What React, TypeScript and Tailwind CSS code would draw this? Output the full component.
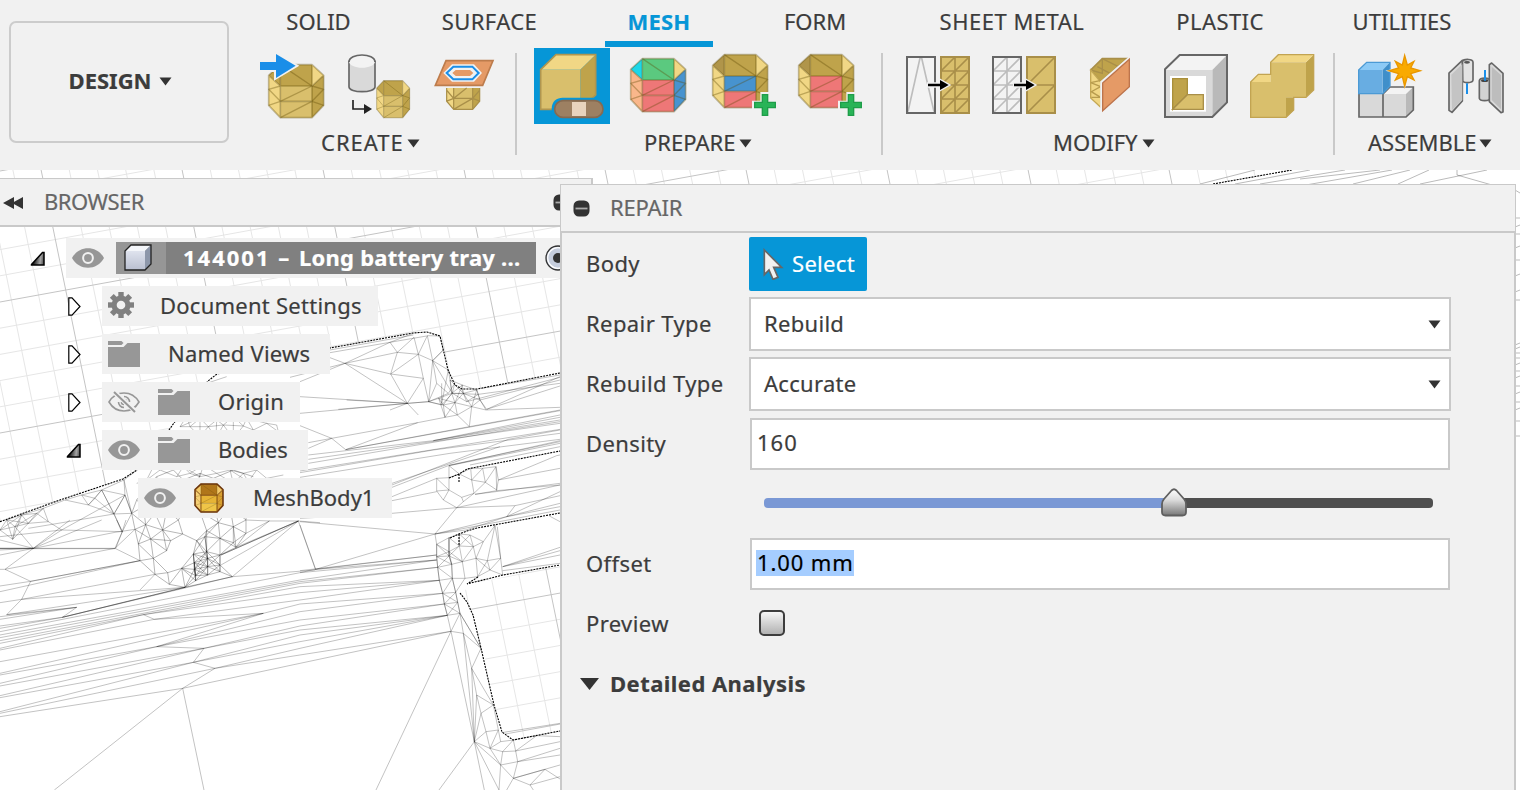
import React from "react";

type Pt = [number, number];

/* ---------- Mesh viewport ---------- */

function link(points: Pt[], reach: number): string {
  let d = "";
  for (let i = 0; i < points.length; i++) {
    for (let j = i + 1; j < points.length; j++) {
      const dx = points[i][0] - points[j][0];
      const dy = points[i][1] - points[j][1];
      if (dx * dx + dy * dy < reach * reach) {
        d += `M${points[i][0]} ${points[i][1]}L${points[j][0]} ${points[j][1]}`;
      }
    }
  }
  return d;
}

function gridLines(major: boolean): string {
  let d = "";
  for (let k = -8; k < 60; k++) {
    if ((k % 5 === 0) !== major) continue;
    const x = 53 + 28.2 * k;
    d += `M${x - 0.205 * 58} 170L${x + 0.205 * 562} 790`;
  }
  for (let k = -5; k < 30; k++) {
    if ((k % 5 === 0) !== major) continue;
    const y = 302 + 26.2 * k;
    d += `M0 ${y}L1300 ${y - 0.182 * 1300}`;
  }
  return d;
}

const MINOR = gridLines(false);
const MAJOR = gridLines(true);

const OUTLINE =
  "M0 521.7L60 500L123 479L137 470L169 430L174 423L208 381L217 374L330 348L413 333L427 332L440 336L445 357L448 370L455 385L462 389L477 389L560 373";

const CLUSTER: Pt[] = [
  [405, 28], [437, 14], [452, 57], [415, 72], [488, 30], [512, 62], [500, 92], [460, 115], [420, 122], [465, 163],
  [503, 158], [545, 145], [508, 193], [555, 202], [548, 42], [535, 0], [590, 62], [615, 50], [620, 32], [660, 55],
  [655, 8], [620, 95], [580, 102], [660, 105], [623, 115], [583, 128], [583, 148], [623, 140], [660, 135], [623, 165],
  [587, 167], [587, 182], [660, 155], [697, 170], [700, 68], [708, 82], [738, 40], [738, 0], [700, 20], [465, -20],
  [395, -20], [430, -40], [500, -30], [560, -40], [600, -25], [640, -50], [690, -40], [740, -45], [410, -60], [440, -100],
  [470, -130], [520, -150], [550, -120], [600, -140], [640, -125], [700, -150], [760, -130], [480, -90], [530, -80], [590, -90],
];

const SHORE: Pt[] = [
  [372, 330], [412, 300], [305, 360], [375, 375], [342, 432], [395, 430], [285, 385], [245, 375], [185, 480], [145, 455],
  [130, 415], [85, 460], [110, 430], [45, 470], [38, 508], [0, 480], [367, 485], [20, 450], [65, 435], [195, 390], [265, 405],
];

const HILL: Pt[] = [
  [570, 170], [600, 200], [625, 170], [648, 205], [670, 165], [700, 205], [730, 168], [760, 180], [800, 160], [830, 165],
  [835, 185], [650, 310], [690, 300], [730, 310], [770, 300], [800, 325], [850, 315], [570, 310], [600, 320], [530, 320],
  [620, 40], [680, 20], [540, 170], [560, 140], [600, 145], [650, 150], [700, 140], [740, 145], [550, 290], [610, 285],
  [440, 330], [480, 300], [410, 340], [460, 290], [700, 340], [745, 335],
];

const RIDGE: Pt[] = [
  [410, 235], [447, 197], [447, 233], [447, 270], [410, 273], [430, 300], [478, 222], [485, 292], [490, 305], [512, 205],
  [515, 240], [522, 280], [548, 205], [556, 247],
];

const LADDER: Pt[] = [
  [410, 433], [410, 470], [413, 502], [418, 541], [428, 580], [433, 612], [442, 646], [447, 413], [447, 455], [447, 468],
  [455, 493], [457, 535], [467, 577], [473, 607], [480, 640], [478, 402], [478, 438], [487, 485], [495, 535], [510, 405],
  [520, 440], [528, 475], [533, 530], [550, 425], [562, 482], [570, 510],
];

const SADDLE: Pt[] = [
  [325, 10], [353, 68], [385, 5], [430, 15], [435, 52], [465, 8], [472, 45], [508, 80], [558, 30], [540, 0],
  [515, 20], [455, -20], [490, -20], [416, -5], [530, -30], [487, -45], [450, -60],
];

const FAN: [number, number, number][] = [
  [512, 410, 465], [518, 410, 480], [540, 410, 480], [545, 413, 502], [550, 413, 502], [560, 418, 541], [578, 418, 541],
  [600, 418, 541], [612, 428, 580], [635, 428, 580], [660, 433, 612], [678, 433, 612], [690, 442, 646], [705, 442, 646],
  [725, 442, 646], [745, 442, 646], [765, 453, 694], [790, 453, 694],
];
const FAN_PATH = FAN.map(([y, x2, y2]) => `M0 ${y}L${x2} ${y2}`).join("");

const CREST =
  "M120 548L410 498M165 580L300 517L370 490M165 580L322 547L372 502M322 547L385 553L412 497M300 517L322 547M372 502L385 553M322 547L302 612L385 553L400 625L302 612L352 700L400 625L416 695L428 572L385 553M412 497L428 572L460 540L450 498L412 497M165 580L352 700L416 695L475 670M30 635L165 580M120 563L165 580M0 622L165 580M30 680L352 700L145 718M165 580L302 612M428 572L475 600L455 700M428 572L487 670L494 640M428 572L440 640L475 670L494 640M416 695L440 640M416 695L455 705L487 670L530 695L565 673M455 640L455 705M460 540L428 572M475 600L487 670M515 657L530 695M560 657L570 690L590 718L810 620M590 718L810 648M487 670L565 673L810 640M575 655L810 615M570 690L810 630M120 540L370 495M530 695L810 622M352 700L300 720M352 700L385 735";

const MIDDLE =
  "M0 40L325 10M140 0L325 10M0 77L95 115L137 149L353 68M25 128L95 115L353 68M25 145L95 115M353 68L435 52M137 149L780 32M137 149L508 80L780 30M558 30L780 22M25 165L400 122L780 45M25 178L780 70M25 190L620 90L780 65M0 213L780 88M0 218L400 150L780 100M0 232L450 160L780 118M400 122L780 52M400 122L780 60M276 255L625 118L780 90M276 262L450 195L780 125M276 250L600 140M447 197L780 130M447 197L780 122M410 235L276 290M588 200L590 272M510 195L780 140M525 283L590 272L780 255M556 247L590 270L595 240L588 200L548 205M556 247L588 200M595 240L780 205M595 240L770 167L780 165M430 300L470 323L645 317L780 287M470 323L405 402M276 302L410 275M276 340L470 323M490 305L470 323M525 283L780 250M470 323L780 255M620 350L780 275M0 355L276 340M0 365L405 402L498 390L620 350L780 320M620 350L645 317M405 402L620 350L780 310M405 402L780 330M0 375L47 508L405 402M47 508L0 518M47 508L410 465M47 508L410 480M405 402L410 433L410 470L413 502L418 541L428 580L433 612L442 646L453 694M447 413V468L455 493L457 535L467 577L480 640L490 700M585 376L602 475L608 525M592 380L602 475L562 482L585 376L550 425M570 510L608 525M602 475L570 510M608 500L780 442M608 500L780 452M608 500L780 465M608 512L780 490M748 348L780 365";

const LOWER =
  "M453 694L490 700M453 694L480 640L543 745M453 694L523 1025L553 1170M453 694L228 1170M523 1025L417 1170M490 700L543 745L515 805L580 915L530 885L515 805L490 700L523 1025L530 885L543 940L580 915L595 990L558 995L543 940L523 1025L558 995L570 1045L595 990L602 1025L570 1045L608 1055L640 1020L602 1025M515 805L523 1025M523 1025L570 1045L602 1095L608 1055L647 1053L640 1020M523 1025L602 1095L597 1170M602 1095L640 1135L653 1085L647 1053L780 1025M653 1085L780 1065M602 1095L653 1085M640 1135L780 1095M640 1135L735 1108L780 1137M640 1135L690 1155L735 1108M690 1155L780 1130M690 1155L700 1170M640 1135L620 1170M523 1025L597 1170M640 1020L710 1007L780 1010M605 998L780 970M647 1053L710 1007M480 640L543 745M653 1085L780 1045";

const PLAIN =
  "M0 590L548 505L163 810M548 505L612 810M548 505L645 445L580 427L612 385L470 380L790 280L463 298L430 284M548 505L900 430M0 580L645 445L900 405M645 445L900 385M0 575L580 427L900 365M580 427L900 345M612 385L900 330M470 380L900 275M0 533L580 427M612 385L900 318M0 527L612 385M0 498L612 385M0 490L470 380L900 300M0 465L470 380M0 460L790 280L900 252M0 425L790 280M0 390L463 298L900 240M430 284L900 218M0 385L430 284M0 370L430 284L900 200M0 362L900 190M0 353L900 185M0 345L900 180M0 335L900 158M0 318L187 292L697 170L945 150M187 292L230 262L20 284L555 202M187 292L555 202M0 325L187 292M0 298L230 262M0 85H345L420 122L92 184L15 148L100 85L0 60M0 105L345 37M100 85L305 0M100 85L210 0M345 85L366 37L350 0M366 37L378 0M345 85L405 28M15 148L345 85M65 238L92 184L0 198M0 215L420 122M65 238L465 163L420 210M65 238L0 248M65 238L20 284M65 238L555 202M0 90L100 85M0 86H345M708 82L895 3L663 105M738 40L808 3L738 0M895 3L697 170M895 3L947 150M895 3L663 135M808 3L895 3L960 8M708 82L808 3M345 37L405 28M92 184L420 122M0 290L230 262M0 148L15 148";

function MeshCanvas() {
  return (
    <svg
      className="absolute inset-0 h-full w-full"
      viewBox="0 170 1520 620"
      fill="none"
      aria-hidden="true"
    >
      <defs>
        <clipPath id="pocket">
          <path d="M460 593L477 583L560 565V731L513 739L502 731L494 705L485 660L473 615Z" />
        </clipPath>
        <clipPath id="body">
          <path d={OUTLINE + "V790H0Z"} />
        </clipPath>
      </defs>
      <rect x="0" y="170" width="1520" height="620" fill="#fff" />
      <path d={MINOR} stroke="#e6e6e6" />
      <path d={MAJOR} stroke="#c4c4c4" />
      <path d={OUTLINE + "V790H0Z"} fill="#fff" />
      <path d="M1206 185L1300 168H1520V790H1200Z" fill="#fff" />
      <g clipPath="url(#pocket)">
        <path d={MINOR} stroke="#e6e6e6" />
        <path d={MAJOR} stroke="#c4c4c4" />
      </g>
      <g stroke="#000" strokeOpacity=".27" strokeWidth="2.7">
        <g clipPath="url(#body)">
          <g transform="translate(0 520) scale(.33333)">
            <path d={PLAIN} />
            <path d={link(CLUSTER, 66)} strokeOpacity=".32" />
            <path d="M187 292L555 202L697 170M0 85H100M663 105L895 3" strokeOpacity=".4" />
          </g>
          <g transform="translate(0 370) scale(.33333)">
            <path d={link(SHORE, 82)} />
            <path d={link(HILL, 66)} />
            <path d="M342 432L85 475M342 432L367 485L185 480L100 535L45 470M375 375L395 430M342 432L305 360M375 375L342 432M0 500L185 480L375 375M347 535L367 485M372 330L395 430" />
          </g>
        </g>
        <g transform="translate(290 170) scale(.33333)">
          <path d={CREST} />
        </g>
        <g transform="translate(300 400) scale(.33333)">
          <path d={MIDDLE} />
          <path d={FAN_PATH} />
          <path d={LOWER} />
          <path d={link(LADDER, 57)} />
          <path d={link(RIDGE, 52)} />
          <path d={link(SADDLE, 62)} />
        </g>
        <path
          strokeWidth="1"
          d="M1200 184L1255 170M1235 184L1310 170M1260 184L1345 170M1300 179L1380 170M1300 186L1392 170M1353 184L1410 170M1398 184L1429 170M1420 184L1487 170M1457 170V175L1492 185M1515 190L1520 193M1515 218H1520M1515 227L1520 225M1515 234H1520M1515 248L1520 246M1515 260H1520M1515 276L1520 274M1515 292L1520 290M1515 300H1520M1515 345L1520 343M1515 349L1520 347M1515 353H1520M1515 358H1520M1515 365L1520 363M1515 371H1520M1515 378L1520 376M1515 386H1520M1515 394L1520 392M1515 402H1520M1515 410L1520 408M1515 421H1520M1515 436H1520"
        />
      </g>
      <g stroke="#000" strokeWidth="1.1" strokeDasharray="2 1">
        <path d={OUTLINE} />
        <path d="M1213 184L1292 170" />
        <path d="M449 478L459 474L467 469L560 451M459 474V482M450 538L459 534L467 531L477 528L560 513M459 534V546" />
        <path d="M478 577L467 584L503 575L560 565M460 593L467 602L473 615L481 648L494 705L502 732L513 740L560 731" />
      </g>
    </svg>
  );
}

/* ---------- Toolbar icons ---------- */

const GOLD = "#d9bf6c";
const GOLD_L = "#f1d785";
const GOLD_D = "#bfa34b";
const GOLD_S = "#a98f49";

type DrumProps = {
  tl?: string;
  back?: string;
  tr?: string;
  left?: string;
  upper?: string;
  lower?: string;
  right?: string;
};

function Drum({
  tl = GOLD_L,
  back = GOLD_D,
  tr = GOLD_L,
  left = GOLD_L,
  upper = GOLD,
  lower = GOLD,
  right = GOLD_D,
}: DrumProps) {
  return (
    <g strokeLinejoin="round">
      <path d="M0 32L35 0V64Z" fill={tl} />
      <path d="M35 0H130V64H35Z" fill={back} />
      <path d="M130 0L165 32L130 64Z" fill={tr} />
      <path d="M0 32L35 64V159L0 122Z" fill={left} />
      <path d="M35 64H130V110H35Z" fill={upper} />
      <path d="M35 110H130V159H35Z" fill={lower} />
      <path d="M130 64L165 32V122L130 159Z" fill={right} />
      <g fill="none" stroke="#5a4600" strokeOpacity=".34" strokeWidth="5">
        <path d="M0 32L35 0H130L165 32V122L130 159H35L0 122ZM0 32L35 64H130L165 32M35 0V159M130 0V159M35 110H130" />
        <path
          d="M35 0L130 64M35 110L130 64M35 159L130 110M35 64L0 74L35 110L0 122M130 64L165 74L130 110L165 122"
          strokeWidth="4"
        />
      </g>
    </g>
  );
}

function Icon({ vb, children, active }: { vb: string; children: React.ReactNode; active?: boolean }) {
  return (
    <div className={active ? "h-[76px] w-[76px] bg-[#0696d7]" : "h-[76px] w-[76px]"}>
      <svg className="block h-full w-full" viewBox={vb} fill="none" aria-hidden="true">
        {children}
      </svg>
    </div>
  );
}

function Plus() {
  return (
    <g>
      <path d="M-39 -13H-14V-39H14V-13H38V13H14V38H-14V13H-39Z" fill="#f1f1f1" />
      <path
        d="M-31 -8H-8V-31H8V-8H31V8H8V31H-8V8H-31Z"
        fill="#29b457"
        stroke="#1f9d49"
        strokeWidth="4"
      />
    </g>
  );
}

function Arrow({ x }: { x: number }) {
  return (
    <g transform={`translate(${x} 135)`}>
      <path d="M-3 -8H32V-22L70 0L32 22V8H-3Z" fill="#f1f1f1" />
      <path d="M0 -3.500H36V-15L62 0L36 15V3.500H0Z" fill="#000" />
    </g>
  );
}

const InsertMesh = () => (
  <Icon vb="12 24 228 228">
    <g transform="translate(56 74)">
      <Drum tl={GOLD_D} />
    </g>
    <path d="M24 60H72V34L148 77L72 122V96H24Z" fill="#f1f1f1" />
    <path d="M30 66H78V42L137 77L78 114V90H30Z" fill="#1a8ee8" />
  </Icon>
);

const Tessellate = () => (
  <Icon vb="270 24 228 228">
    <path
      d="M297 62V140C297 160 375 160 375 140V62"
      fill="#d9d9d9"
      stroke="#666"
      strokeWidth="5"
    />
    <path d="M297 64C297 38 375 38 375 64C375 90 297 90 297 64Z" fill="#f3f3f3" />
    <path d="M297 66C297 38 375 38 375 66" stroke="#666" strokeWidth="5" />
    <path d="M309 180V207H345" stroke="#222" strokeWidth="5" />
    <path d="M342 192L366 207L342 222Z" fill="#222" />
    <g transform="translate(380 122) scale(.6 .7)">
      <Drum tl={GOLD_D} />
    </g>
  </Icon>
);

const SectionSketch = () => (
  <Icon vb="528 24 228 228">
    <g transform="translate(590 101) scale(.6 .675)">
      <path d="M0 64H165V122L130 159H35L0 122Z" fill={GOLD} />
      <path d="M0 64H35V159L0 122Z" fill={GOLD_L} />
      <path d="M130 64H165V122L130 159Z" fill={GOLD_D} />
      <path
        d="M0 64V122L35 159H130L165 122V64M35 64V159M130 64V159M35 110H130L165 122M35 110L100 64M35 159L130 110L165 74M0 74L35 110L0 122"
        stroke={GOLD_S}
        strokeWidth="6"
      />
    </g>
    <path d="M588 62H729L698 136H556Z" fill="#e59a66" stroke="#bd7c4c" strokeWidth="5" />
    <path d="M580 99L606 73H672L696 99L672 125H606Z" fill="#f1f1f1" />
    <path
      d="M590 99L610 80H667L686 99L667 118H610Z"
      fill="#f1f1f1"
      stroke="#1a8ee8"
      strokeWidth="6"
    />
    <path d="M607 99L617 90H660L670 99L660 108H617Z" fill="#e59a66" />
  </Icon>
);

const RepairTool = () => (
  <Icon vb="42 144 228 228" active>
    <path d="M62 209L108 164H227L181 209Z" fill={GOLD_L} />
    <path d="M181 209L227 164V283L181 328Z" fill={GOLD_D} />
    <path d="M62 209H181V328H62Z" fill={GOLD} />
    <path d="M62 209L108 164H227V285L181 328H62Z" stroke="#b0964f" strokeWidth="5" />
    <path d="M95 330V326C95 304 110 293 128 293H230V372H95Z" fill="#0696d7" />
    <rect x="104" y="302" width="145" height="50" rx="25" fill="#9d8062" stroke="#866a50" strokeWidth="5" />
    <rect x="156" y="306" width="42" height="42" fill="#e8d3bd" />
  </Icon>
);

const FaceGroups = () => (
  <Icon vb="300 144 228 228">
    <g transform="translate(332 176)">
      <Drum
        tl="#1dd6e8"
        back="#5bc97f"
        tr={GOLD_L}
        left="#f9b78b"
        upper="#ee7777"
        lower="#ee7777"
        right="#4793cf"
      />
    </g>
  </Icon>
);

const CombineGroups = () => (
  <Icon vb="558 144 228 228">
    <g transform="translate(578 164)">
      <Drum tl="#b0954a" upper="#4793cf" lower="#ee7777" />
    </g>
    <g transform="translate(735 315)">
      <Plus />
    </g>
  </Icon>
);

const CreateGroup = () => (
  <Icon vb="816 144 228 228">
    <g transform="translate(836 164)">
      <Drum tl="#b0954a" upper="#ee7777" lower="#ee7777" />
    </g>
    <g transform="translate(993 315)">
      <Plus />
    </g>
  </Icon>
);

const Remesh = () => (
  <Icon vb="30 24 228 228">
    <rect x="51" y="51" width="84" height="168" fill="#f3f3f3" />
    <path d="M54 215L90 54H95L132 215" stroke="#bdbdbd" strokeWidth="5" />
    <rect x="51" y="51" width="84" height="168" stroke="#666" strokeWidth="6" />
    <rect x="153" y="51" width="84" height="168" fill={GOLD} stroke={GOLD_S} strokeWidth="6" />
    <path
      d="M195 51V219M153 93H237M153 135H237M153 177H237M153 93L195 51M195 93L237 51M153 135L195 93M195 135L237 93M153 177L195 135M195 177L237 135M153 219L195 177M195 219L237 177"
      stroke={GOLD_S}
      strokeWidth="5"
    />
    <Arrow x={114} />
  </Icon>
);

const Reduce = () => (
  <Icon vb="288 24 228 228">
    <rect x="309" y="51" width="84" height="168" fill="#f3f3f3" />
    <path
      d="M351 51V219M309 93H393M309 135H393M309 177H393M309 93L351 51M351 93L393 51M309 135L351 93M351 135L393 93M309 177L351 135M351 177L393 135M309 219L351 177M351 219L393 177"
      stroke="#bdbdbd"
      strokeWidth="5"
    />
    <rect x="309" y="51" width="84" height="168" stroke="#666" strokeWidth="6" />
    <rect x="411" y="51" width="84" height="168" fill={GOLD} stroke={GOLD_S} strokeWidth="6" />
    <path d="M411 135L495 51M411 219L495 135M411 135H495" stroke={GOLD_S} strokeWidth="5" />
    <Arrow x={372} />
  </Icon>
);

const PlaneCut = () => (
  <Icon vb="546 24 228 228">
    <path d="M602 90L637 56H712L632 126Z" fill={GOLD_D} stroke={GOLD_S} strokeWidth="5" />
    <path d="M637 56V100L602 90M637 56L685 80M622 80L660 100" stroke={GOLD_S} strokeWidth="4" />
    <path d="M602 90L632 126V202L602 174Z" fill={GOLD_L} stroke="#c4a855" strokeWidth="4" />
    <path d="M602 128L632 140L604 155L632 172L604 172M602 128L630 122" stroke="#b89c4e" strokeWidth="4" />
    <path d="M634 218V126L722 50" stroke="#f1f1f1" strokeWidth="7" />
    <path d="M638 129L718 58V140L638 212Z" fill="#e59a66" stroke="#bd744c" strokeWidth="4" />
  </Icon>
);

const Shell = () => (
  <Icon vb="804 24 228 228">
    <path d="M825 90L869 45H1011L967 90Z" fill="#f3f3f3" />
    <path d="M967 90L1011 45V187L967 231Z" fill="#b9b9b9" />
    <path d="M825 90H967V231H825Z" fill="#d9d9d9" />
    <path d="M825 88L869 45H1011V187L967 231H825Z" stroke="#666" strokeWidth="6" />
    <rect x="840" y="108" width="108" height="107" fill="#fff" />
    <path d="M848 116H892V164L848 208Z" fill={GOLD_D} stroke="#a98f3b" strokeWidth="4" />
    <path d="M848 208L892 164H940V208Z" fill={GOLD} stroke={GOLD_S} strokeWidth="4" />
  </Icon>
);

const Combine = () => (
  <Icon vb="1062 24 228 228">
    <path d="M1188 172H1212V210L1188 233Z" fill={GOLD_D} />
    <path d="M1248 67L1271 44V150L1248 172Z" fill={GOLD_D} />
    <path d="M1082 126L1105 103H1142L1142 126ZM1142 67L1165 44H1271L1248 67Z" fill={GOLD_L} />
    <path d="M1082 126H1142V67H1248V172H1188V233H1082Z" fill={GOLD} />
    <path
      d="M1082 126L1105 103H1142V67L1165 44H1271V150L1248 172H1211V210L1188 232H1082Z"
      stroke="#c2a452"
      strokeWidth="4"
    />
  </Icon>
);

const NewComponent = () => (
  <Icon vb="84 144 228 228">
    <path d="M189 282L210 261H280L258 282Z" fill="#f3f3f3" />
    <path d="M258 282L280 261V330L258 351Z" fill="#b9b9b9" />
    <path d="M117 282H258V351H117Z" fill="#d9d9d9" />
    <path d="M117 282V351H258L280 330V261H210L189 282V351" stroke="#666" strokeWidth="5" />
    <path d="M116 210L140 187H210L188 210Z" fill="#8ccaf6" />
    <path d="M188 210L210 187V258L188 281Z" fill="#3f8fca" />
    <path d="M116 210H188V281H116Z" fill="#68ade2" />
    <path d="M116 210L140 187H210V258L188 281H116Z" stroke="#4b9ad5" strokeWidth="4" />
    <path
      d="M254 155L264 185L292 175L278 204L312 212L279 221L292 250L264 238L254 268L245 238L215 250L229 221L196 212L229 204L215 175L245 185Z"
      fill="#f1f1f1"
    />
    <path
      d="M254 166L262 195L282 184L272 204L301 212L272 221L282 240L262 230L254 259L247 230L226 240L236 221L207 212L236 204L226 184L247 195Z"
      fill="#f9aa00"
      stroke="#e99700"
      strokeWidth="4"
    />
  </Icon>
);

const Joint = () => (
  <Icon vb="342 144 228 228">
    <g stroke="#666" strokeWidth="5" strokeLinejoin="round">
      <path d="M427 184C432 176 460 176 459 187V240C458 250 430 250 428 242Z" fill="#e3e3e3" />
      <path d="M387 219L427 181V303L396 337L387 331Z" fill="#d9d9d9" />
      <path d="M478 242C480 232 508 232 510 242V295C508 304 480 304 478 295Z" fill="#d2d2d2" />
      <path d="M508 194L515 189L549 220V336L543 338L508 305Z" fill="#d9d9d9" />
    </g>
    <path d="M394 224L427 192V300L396 330Z" fill="#c4c4c4" />
    <path d="M515 200L543 225V328L515 300Z" fill="#bdbdbd" />
    <ellipse cx="441" cy="187" rx="9" ry="4" fill="#555" />
    <ellipse cx="494" cy="242" rx="11" ry="4" fill="#444" />
    <path d="M441 250V282M495 210V242" stroke="#1a8ee8" strokeWidth="6" />
  </Icon>
);

/* ---------- Shared pieces ---------- */

function Text({ track = "", children }: { track?: string; children: React.ReactNode }) {
  return <span className={"pb-[2px] whitespace-nowrap " + track}>{children}</span>;
}

function Caret() {
  return (
    <svg className="block h-[9px] w-[13px] shrink-0" viewBox="0 0 13 9" aria-hidden="true">
      <path d="M.5.5H12.500L6.500 8.500Z" fill="#333" />
    </svg>
  );
}

function Dot() {
  return (
    <svg className="block h-[17px] w-[17px]" viewBox="0 0 17 17" aria-hidden="true">
      <rect x=".5" y=".5" width="16" height="16" rx="5.500" fill="#333" />
      <path d="M2.500 8.500H14.500" stroke="#ababab" strokeWidth="1.800" />
    </svg>
  );
}

/* ---------- Toolbar ---------- */

const TABS = [
  { name: "SOLID", box: "ml-[34px] w-[111px]", track: "" },
  { name: "SURFACE", box: "ml-[44px] w-[143px]", track: "tracking-[0.4px]" },
  { name: "MESH", box: "ml-[44px] w-[108px]", track: "tracking-[0.2px]", active: true },
  { name: "FORM", box: "ml-[48px] w-[108px]", track: "" },
  { name: "SHEET METAL", box: "ml-[46px] w-[194px]", track: "tracking-[0.5px]" },
  { name: "PLASTIC", box: "ml-[43px] w-[136px]", track: "tracking-[0.4px]" },
  { name: "UTILITIES", box: "ml-[42px] w-[144px]", track: "" },
];

type GroupProps = { name: string; box: string; label: string; track?: string; children: React.ReactNode };

function Group({ name, box, label, track, children }: GroupProps) {
  return (
    <section className={"shrink-0 " + box}>
      <div className="flex gap-[10px]">{children}</div>
      <div className={"mt-[3px] flex h-[32px] items-center whitespace-nowrap " + label}>
        <Text track={track}>{name}</Text>
        <Caret />
      </div>
    </section>
  );
}

const Rule = () => <div className="mt-[5px] h-[102px] w-[2px] shrink-0 bg-[#c9c9c9]" />;

function Toolbar() {
  return (
    <header className="flex h-[170px] shrink-0 bg-[#f1f1f1]">
      <button className="mt-[21px] ml-[9px] flex h-[122px] w-[220px] shrink-0 items-center justify-center gap-[8px] rounded-[7px] border-2 border-[#cccccc] pb-[2px] pl-[3px] font-bold">
        <Text>DESIGN</Text>
        <Caret />
      </button>
      <div className="flex flex-1 flex-col">
        <nav className="flex h-[48px]">
          {TABS.map((t) => (
            <div
              key={t.name}
              className={
                "flex h-[47px] shrink-0 justify-center border-b-6 pt-[6px] leading-[30px] whitespace-nowrap " +
                t.box +
                " " +
                t.track +
                (t.active ? " border-[#0696d7] font-bold text-[#0696d7]" : " border-transparent")
              }
            >
              {t.name}
            </div>
          ))}
        </nav>
        <div className="flex">
          <Group name="CREATE" box="ml-[25px] w-[261px]" label="gap-[3px] pl-[67px]" track="tracking-[1px]">
            <InsertMesh />
            <Tessellate />
            <SectionSketch />
          </Group>
          <Rule />
          <Group name="PREPARE" box="ml-[17px] w-[347px]" label="gap-[4px] pl-[110px]">
            <RepairTool />
            <FaceGroups />
            <CombineGroups />
            <CreateGroup />
          </Group>
          <Rule />
          <Group name="MODIFY" box="ml-[17px] w-[433px]" label="gap-[4px] pl-[153px]">
            <Remesh />
            <Reduce />
            <PlaneCut />
            <Shell />
            <Combine />
          </Group>
          <Rule />
          <Group name="ASSEMBLE" box="ml-[13px] w-[172px]" label="gap-[3px] pl-[20px]">
            <NewComponent />
            <Joint />
          </Group>
        </div>
      </div>
    </header>
  );
}

/* ---------- Browser tree ---------- */

function Eye() {
  return (
    <svg className="block h-[22px] w-[32px] shrink-0" viewBox="0 0 32 22" aria-hidden="true">
      <path d="M0 11C7 -2 25 -2 32 11C25 24 7 24 0 11Z" fill="#979797" />
      <circle cx="16" cy="11" r="4.900" fill="#979797" stroke="#f1f1f1" strokeWidth="2" />
    </svg>
  );
}

function EyeOff() {
  return (
    <svg className="block h-[22px] w-[32px] shrink-0" viewBox="0 0 32 22" fill="none" stroke="#979797" strokeWidth="1.600" aria-hidden="true">
      <path d="M1 11C8 -1 24 -1 31 11C24 23 8 23 1 11Z" />
      <path d="M16 5.500A5.500 5.500 0 0 1 21.500 11M10.500 11A5.500 5.500 0 0 0 16 16.500M16 8.500A2.500 2.500 0 0 1 18.500 11M13.500 11A2.500 2.500 0 0 0 16 13.500" />
      <path d="M5 0L27 20" stroke="#f1f1f1" strokeWidth="5" />
      <path d="M6 1L27 21" strokeWidth="2" />
    </svg>
  );
}

function Folder() {
  return (
    <svg className="block h-[26px] w-[32px] shrink-0" viewBox="0 0 32 26" fill="#979797" aria-hidden="true">
      <path d="M0 0H13.500L15.500 2L13.500 4H0Z" />
      <path d="M0 6H15.500L19.500 2H32V26H0Z" />
    </svg>
  );
}

function Gear() {
  return (
    <svg className="block h-[26px] w-[26px] shrink-0" viewBox="-13 -13 26 26" aria-hidden="true">
      <g fill="#808080">
        <circle r="9.500" />
        {[0, 45, 90, 135].map((a) => (
          <rect key={a} x="-2.700" y="-13" width="5.400" height="26" transform={`rotate(${a})`} />
        ))}
      </g>
      <circle r="4.300" fill="#f1f1f1" />
    </svg>
  );
}

function Cube() {
  return (
    <svg className="mb-[2px] block h-[27px] w-[28px] shrink-0" viewBox="0 0 28 27" aria-hidden="true">
      <defs>
        <linearGradient id="cubeFront" x1="0" y1="0" x2="0" y2="1">
          <stop offset="0" stopColor="#dfe3ee" />
          <stop offset="1" stopColor="#b9bfd0" />
        </linearGradient>
      </defs>
      <path d="M1 7L7 1H27L21 7Z" fill="#f4f6fa" />
      <path d="M21 7L27 1V20L21 26Z" fill="#8d97aa" />
      <path d="M1 7H21V26H1Z" fill="url(#cubeFront)" />
      <path d="M1 7L7 1H27V20L21 26H1Z" fill="none" stroke="#222" strokeWidth="1.300" />
    </svg>
  );
}

function MeshIcon() {
  return (
    <svg className="block h-[30px] w-[30px] shrink-0" viewBox="-6 -6 177 171" preserveAspectRatio="none" aria-hidden="true">
      <Drum tl="#f3c866" back="#b0761a" tr="#f3c866" left="#f6cf74" upper="#e6b436" lower="#efc548" right="#d9a030" />
      <path
        d="M0 32L35 0H130L165 32V122L130 159H35L0 122Z"
        fill="none"
        stroke="#6e370c"
        strokeWidth="9"
      />
      <path d="M0 32L35 64H130L165 32M35 64V159M130 64V159" fill="none" stroke="#8a4f12" strokeWidth="5" />
    </svg>
  );
}

function Opened() {
  return (
    <svg className="block h-[15px] w-[15px]" viewBox="0 0 15 15" aria-hidden="true">
      <defs>
        <linearGradient id="openTri" x1="0.200" y1="0.800" x2="1" y2="0.900">
          <stop offset="0" stopColor="#222" />
          <stop offset="0.600" stopColor="#a5a5a5" />
          <stop offset="1" stopColor="#444" />
        </linearGradient>
      </defs>
      <path d="M1.500 13.500L12.500 1.500H14V14H1.500Z" fill="url(#openTri)" stroke="#000" strokeWidth="1.500" />
    </svg>
  );
}

function Closed() {
  return (
    <svg className="block h-[19px] w-[13px]" viewBox="0 0 13 19" aria-hidden="true">
      <path d="M.8.8H4L12 9.500L4 18.200H.8Z" fill="#fff" stroke="#000" strokeWidth="1.200" />
    </svg>
  );
}

type RowProps = { twist?: React.ReactNode; indent: string; chip: string; children: React.ReactNode };

function Row({ twist, indent, chip, children }: RowProps) {
  return (
    <li className="flex h-[40px] items-center">
      <div className={"flex shrink-0 " + indent}>{twist}</div>
      <div className={"flex h-[40px] shrink-0 items-center bg-[#f1f1f1] whitespace-nowrap " + chip}>{children}</div>
    </li>
  );
}

function BrowserPanel() {
  return (
    <aside className="relative mt-[8px] w-[593px] shrink-0">
      <div className="flex h-[49px] items-center border-t border-r-2 border-b-2 border-[#c9c9c9] bg-[#f1f1f1] text-[#666666]">
        <svg className="mt-[2px] ml-[3px] block h-[12px] w-[20px]" viewBox="0 0 20 12" fill="#333" aria-hidden="true">
          <path d="M0 6L11 0V12ZM9 6L20 0V12Z" />
        </svg>
        <div className="flex pl-[21px]">
          <Text track="tracking-[-0.5px]">BROWSER</Text>
        </div>
        <div className="mr-[21px] ml-auto pt-px">
          <Dot />
        </div>
      </div>
      <ul className="mt-[11px] flex flex-col gap-[8px]">
        <Row twist={<Opened />} indent="w-[66px] pl-[30px]" chip="w-[526px] pl-[6px]">
          <Eye />
          <div className="ml-[12px] flex h-[32px] w-[50px] items-center bg-[#969696] pl-[8px]">
            <Cube />
          </div>
          <div className="flex h-[32px] w-[370px] items-center bg-[#808080] pl-[17px] font-bold text-white">
            <Text track="tracking-[2px]">144001 –&nbsp;</Text>
            <Text track="tracking-[0.24px]">Long battery tray ...</Text>
          </div>
          <svg className="mb-px ml-[9px] block h-[26px] w-[26px]" viewBox="0 0 26 26" aria-hidden="true">
            <circle cx="13" cy="13" r="12" fill="#c5cddd" stroke="#333" strokeWidth="1.300" />
            <circle cx="13" cy="13" r="10.300" fill="none" stroke="#fff" strokeWidth="1.200" />
            <circle cx="13" cy="13" r="5" fill="#333" />
          </svg>
        </Row>
        <Row twist={<Closed />} indent="w-[102px] pl-[68px]" chip="w-[276px] pl-[6px]">
          <div className="pb-[2px]">
            <Gear />
          </div>
          <div className="flex pl-[26px]">
            <Text track="tracking-[0.25px]">Document Settings</Text>
          </div>
        </Row>
        <Row twist={<Closed />} indent="w-[102px] pl-[68px]" chip="w-[228px] pl-[6px]">
          <Folder />
          <div className="flex pl-[28px]">
            <Text track="tracking-[0.2px]">Named Views</Text>
          </div>
        </Row>
        <Row twist={<Closed />} indent="w-[102px] pl-[68px]" chip="w-[198px] pl-[6px]">
          <EyeOff />
          <div className="ml-[18px]">
            <Folder />
          </div>
          <div className="flex pl-[28px]">
            <Text track="tracking-[0.2px]">Origin</Text>
          </div>
        </Row>
        <Row twist={<Opened />} indent="w-[102px] pl-[66px]" chip="w-[206px] pl-[6px]">
          <Eye />
          <div className="ml-[18px]">
            <Folder />
          </div>
          <div className="flex pl-[28px]">
            <Text>Bodies</Text>
          </div>
        </Row>
        <Row indent="w-[138px]" chip="w-[254px] pl-[6px]">
          <Eye />
          <div className="ml-[18px]">
            <MeshIcon />
          </div>
          <div className="flex pl-[29px]">
            <Text>MeshBody1</Text>
          </div>
        </Row>
      </ul>
    </aside>
  );
}

/* ---------- Repair dialog ---------- */

function Field({ label, children }: { label: string; children?: React.ReactNode }) {
  return (
    <div className="flex h-[60px] items-center">
      <div className="flex w-[163px] shrink-0">
        <Text track="tracking-[0.4px]">{label}</Text>
      </div>
      {children}
    </div>
  );
}

function Dropdown({ value }: { value: string }) {
  return (
    <div className="flex h-[54px] w-[702px] items-center justify-between border-2 border-[#c9c9c9] bg-white pr-[8px] pl-[13px]">
      <Text track="tracking-[0.3px]">{value}</Text>
      <Caret />
    </div>
  );
}

function RepairPanel() {
  return (
    <div className="absolute top-[14px] left-[560px] flex h-[606px] w-[956px] flex-col bg-[#f1f1f1]">
      <div className="flex h-[49px] shrink-0 items-center border border-b-2 border-[#c9c9c9] text-[#666666]">
        <div className="ml-[12px] pt-px">
          <Dot />
        </div>
        <div className="flex pl-[20px]">
          <Text track="tracking-[-0.2px]">REPAIR</Text>
        </div>
      </div>
      <div className="flex-1 border-x-2 border-[#c9c9c9] pt-px pl-[24px]">
        <Field label="Body">
          <button className="flex h-[54px] w-[118px] items-center rounded-[2px] bg-[#0696d7] pl-[14px] text-white">
            <svg className="block h-[32px] w-[21px] shrink-0" viewBox="0 0 63 96" aria-hidden="true">
              <path d="M4 6L56 58H32L45 88L30 94L18 66L4 80Z" fill="#f1f1f1" stroke="#666" strokeWidth="5" />
            </svg>
            <div className="flex pl-[8px]">
              <Text track="tracking-[0.3px]">Select</Text>
            </div>
          </button>
        </Field>
        <Field label="Repair Type">
          <Dropdown value="Rebuild" />
        </Field>
        <Field label="Rebuild Type">
          <Dropdown value="Accurate" />
        </Field>
        <Field label="Density">
          <div className="ml-px flex h-[52px] w-[700px] items-center border-2 border-[#c9c9c9] bg-white pb-[2px] pl-[5px]">
            <Text track="tracking-[1px]">160</Text>
          </div>
        </Field>
        <Field label="">
          <div className="relative mb-[2px] ml-[15px] flex h-[28px] w-[669px] items-center">
            <div className="h-[10px] w-[410px] rounded-l-[4px] bg-[#7a98d5]" />
            <div className="h-[10px] flex-1 rounded-r-[4px] bg-[#4f4f4f]" />
            <svg className="absolute -top-px left-[396px] h-[29px] w-[28px]" viewBox="0 0 28 29" aria-hidden="true">
              <defs>
                <linearGradient id="thumb" x1="0" y1="0" x2="0" y2="1">
                  <stop offset="0" stopColor="#fff" />
                  <stop offset="0.400" stopColor="#ddd" />
                  <stop offset="1" stopColor="#777" />
                </linearGradient>
              </defs>
              <path
                d="M11.500 2.500Q14 0 16.500 2.500L24 11Q26 13.500 26 16V24Q26 27.500 22.500 27.500H5.500Q2 27.500 2 24V16Q2 13.500 4 11Z"
                fill="url(#thumb)"
                stroke="#5f5f5f"
                strokeWidth="1.800"
              />
            </svg>
          </div>
        </Field>
        <Field label="Offset">
          <div className="ml-px flex h-[52px] w-[700px] items-center border-2 border-[#c9c9c9] bg-white pb-[2px] pl-[4px] text-black">
            <div className="flex h-[26px] w-[98px] items-center bg-[#a5cdff] pl-[1px]">
              <Text track="tracking-[0.9px]">1.00 mm</Text>
            </div>
          </div>
        </Field>
        <Field label="Preview">
          <div className="mb-[2px] ml-[10px] h-[26px] w-[26px] rounded-[5px] border-2 border-[#3d3d3d] bg-gradient-to-b from-[#f6f6f6] to-[#b2b2b2]" />
        </Field>
        <div className="-ml-[6px] flex h-[60px] items-center gap-[11px] font-bold">
          <svg className="block h-[12px] w-[19px]" viewBox="0 0 19 12" aria-hidden="true">
            <path d="M0 0H19L9.500 12Z" fill="#333" />
          </svg>
          <Text track="tracking-[0.45px]">Detailed Analysis</Text>
        </div>
      </div>
    </div>
  );
}

export default function App() {
  return (
    <div className="flex h-[790px] w-[1520px] flex-col overflow-hidden bg-white font-['Noto_Sans',sans-serif] text-[22px] leading-[30px] text-[#3c3c3c] [-webkit-text-stroke:0.2px]">
      <Toolbar />
      <main className="relative flex flex-1 items-start overflow-hidden">
        <MeshCanvas />
        <BrowserPanel />
        <RepairPanel />
      </main>
    </div>
  );
}
